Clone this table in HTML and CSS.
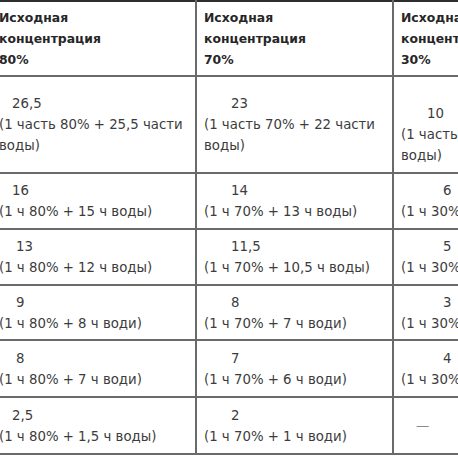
FILE: index.html
```html
<!DOCTYPE html>
<html lang="ru">
<head>
<meta charset="utf-8">
<link rel="stylesheet" href="styles.css">
</head>
<body>
<div class="wrap">
<table class="tbl">
  <colgroup><col class="c1"><col class="c2"><col class="c3"></colgroup>
  <tr class="head">
    <th>Исходная<br>концентрация<br>80%</th>
    <th>Исходная<br>концентрация<br>70%</th>
    <th>Исходная<br>концентрация<br>30%</th>
  </tr>
  <tr class="r1">
    <td><span class="n a">26,5</span><br>(1 часть 80% + 25,5 части<br>воды)</td>
    <td><span class="n b">23</span><br>(1 часть 70% + 22 части<br>воды)</td>
    <td class="low"><span class="n c2d">10</span><br>(1 часть 30% + 9 частей<br>воды)</td>
  </tr>
  <tr class="r2">
    <td><span class="n a">16</span><br>(1 ч 80% + 15 ч воды)</td>
    <td><span class="n b">14</span><br>(1 ч 70% + 13 ч воды)</td>
    <td><span class="n c1d">6</span><br>(1 ч 30% + 5 ч воды)</td>
  </tr>
  <tr class="r3">
    <td><span class="n a2">13</span><br>(1 ч 80% + 12 ч воды)</td>
    <td><span class="n b">11,5</span><br>(1 ч 70% + 10,5 ч воды)</td>
    <td><span class="n c1d">5</span><br>(1 ч 30% + 4 ч воды)</td>
  </tr>
  <tr class="r4">
    <td><span class="n a2">9</span><br>(1 ч 80% + 8 ч води)</td>
    <td><span class="n b">8</span><br>(1 ч 70% + 7 ч води)</td>
    <td><span class="n c1d">3</span><br>(1 ч 30% + 2 ч води)</td>
  </tr>
  <tr class="r5">
    <td><span class="n a2">8</span><br>(1 ч 80% + 7 ч води)</td>
    <td><span class="n b">7</span><br>(1 ч 70% + 6 ч води)</td>
    <td><span class="n c1d">4</span><br>(1 ч 30% + 3 ч води)</td>
  </tr>
  <tr class="r6">
    <td><span class="n a">2,5</span><br>(1 ч 80% + 1,5 ч воды)</td>
    <td><span class="n b">2</span><br>(1 ч 70% + 1 ч води)</td>
    <td class="dash">—</td>
  </tr>
</table>
</div>
</body>
</html>
```
FILE: styles.css
```css
html, body {
  margin: 0;
  padding: 0;
  background: #ffffff;
  overflow: hidden;
  width: 458px;
  height: 458px;
}
.wrap {
  margin-left: -10px;
  width: 700px;
}
.tbl {
  border-collapse: collapse;
  table-layout: fixed;
  width: 599px;
  font-family: "DejaVu Sans", Verdana, sans-serif;
  font-size: 13.3px;
  color: #3c3c3c;
}
.c1 { width: 205px; }
.c2 { width: 197px; }
.c3 { width: 197px; }
.tbl th, .tbl td {
  border: 2px solid #6a6a6a;
  padding: 0 6px 0 7px;
  text-align: left;
  white-space: nowrap;
  overflow: hidden;
}
.tbl tr:first-child th { border-top: 2px solid #2e2e2e; }
.head th {
  font-size: 12.4px;
  font-weight: bold;
  color: #262626;
  line-height: 21px;
  vertical-align: top;
  padding-top: 5px;
  height: 68px;
}
.tbl td {
  line-height: 21px;
  vertical-align: middle;
}
.r1 td { height: 95px; }
.r2 td, .r3 td { height: 54px; }
.r4 td { height: 53px; }
.r5 td, .r6 td { height: 55px; }
.tbl .r1 td.low {
  vertical-align: top;
  padding-top: 26px;
  height: 69px;
}
.n { display: inline-block; }
.a { margin-left: 13px; }
.a2 { margin-left: 17px; }
.b { margin-left: 27px; }
.c2d { margin-left: 26px; }
.c1d { margin-left: 42px; }
.tbl td.dash {
  color: #8a8a8a;
  padding-left: 22px;
}
```
